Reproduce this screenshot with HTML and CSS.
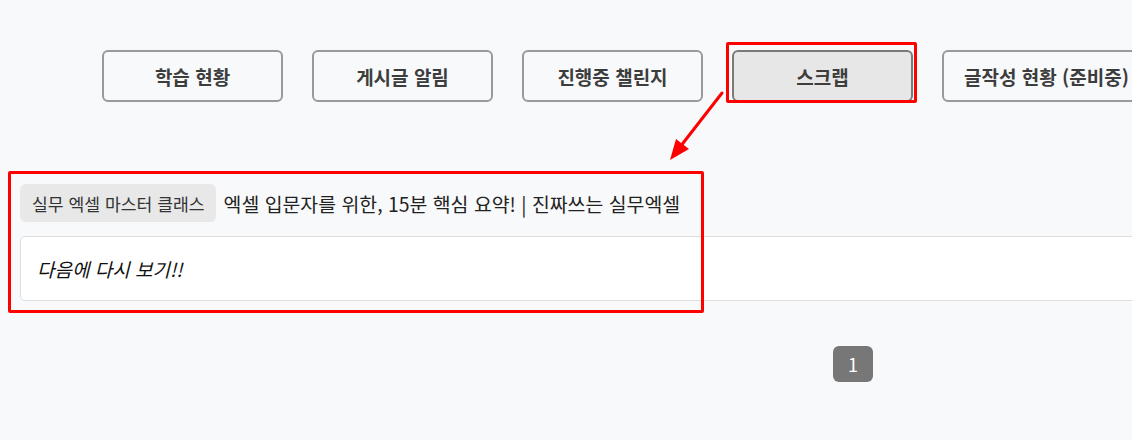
FILE: index.html
```html
<!DOCTYPE html>
<html lang="ko">
<head>
<meta charset="utf-8">
<link rel="stylesheet" href="styles.css">
</head>
<body>
<div class="page">
  <nav class="tabs">
    <button class="tab">학습 현황</button>
    <button class="tab">게시글 알림</button>
    <button class="tab">진행중 챌린지</button>
    <button class="tab active">스크랩</button>
    <button class="tab">글작성 현황 (준비중)</button>
  </nav>

  <section class="content">
    <div class="item-head">
      <span class="tag">실무 엑셀 마스터 클래스</span>
      <span class="title">엑셀 입문자를 위한, 15분 핵심 요약! | 진짜쓰는 실무엑셀</span>
    </div>
    <div class="memo">다음에 다시 보기!!</div>
    <div class="pager"><span class="page-num">1</span></div>
  </section>

  <div class="mark mark-tab"></div>
  <div class="mark mark-item"></div>
  <svg class="arrow" width="1132" height="440" viewBox="0 0 1132 440">
    <line x1="722" y1="93" x2="680" y2="147" stroke="#ff0000" stroke-width="3" stroke-linecap="round"/>
    <polygon points="670,160 676,139 689,149" fill="#ff0000"/>
  </svg>
</div>
</body>
</html>
```

FILE: styles.css
```css
html, body {
  margin: 0;
  padding: 0;
  background: #f8f9fa;
  overflow: hidden;
}

body {
  font-family: "Noto Sans CJK KR", "Noto Sans", sans-serif;
  color: #222;
}

.page {
  position: relative;
  width: 1132px;
  height: 440px;
  overflow: hidden;
}

.tabs {
  display: flex;
  gap: 29px;
  padding: 50px 0 0 102px;
  width: 1400px;
}

.tab {
  flex: 0 0 auto;
  box-sizing: border-box;
  min-width: 181px;
  height: 52px;
  border: 2px solid #9a9a9a;
  border-radius: 6px;
  background: #f8f9fa;
  font-family: "Noto Sans CJK KR", "Noto Sans", sans-serif;
  font-size: 19px;
  font-weight: 700;
  color: #3d3d3d;
  padding: 0 20px;
  white-space: nowrap;
}

.tab.active {
  background: #e7e7e7;
  border-color: #7a7a7a;
}

.content {
  width: 1666px;
  padding: 82px 0 0 20px;
}

.item-head {
  display: flex;
  align-items: center;
  gap: 8px;
  height: 38px;
}

.tag {
  display: inline-flex;
  align-items: center;
  height: 38px;
  padding: 0 11px 0 12px;
  background: #e8e8e8;
  border-radius: 6px;
  font-size: 17.2px;
  color: #333;
  white-space: nowrap;
}

.title {
  font-size: 19.4px;
  color: #222;
  white-space: nowrap;
}

.memo {
  margin-top: 14px;
  height: 63px;
  display: flex;
  align-items: center;
  padding-left: 16px;
  background: #fff;
  border: 1px solid #dedede;
  border-radius: 5px;
  font-size: 19px;
  font-style: italic;
  color: #111;
}

.pager {
  display: flex;
  justify-content: center;
  margin-top: 45px;
}

.page-num {
  display: inline-flex;
  align-items: center;
  justify-content: center;
  width: 40px;
  height: 36px;
  background: #777;
  color: #fff;
  border-radius: 6px;
  font-size: 18px;
}

.mark {
  position: absolute;
  border: 3px solid #ff0000;
  border-radius: 2px;
  box-sizing: border-box;
}

.mark-tab {
  left: 726px;
  top: 42px;
  width: 191px;
  height: 61px;
}

.mark-item {
  left: 8px;
  top: 171px;
  width: 696px;
  height: 142px;
}

.arrow {
  position: absolute;
  left: 0;
  top: 0;
  pointer-events: none;
}
```
